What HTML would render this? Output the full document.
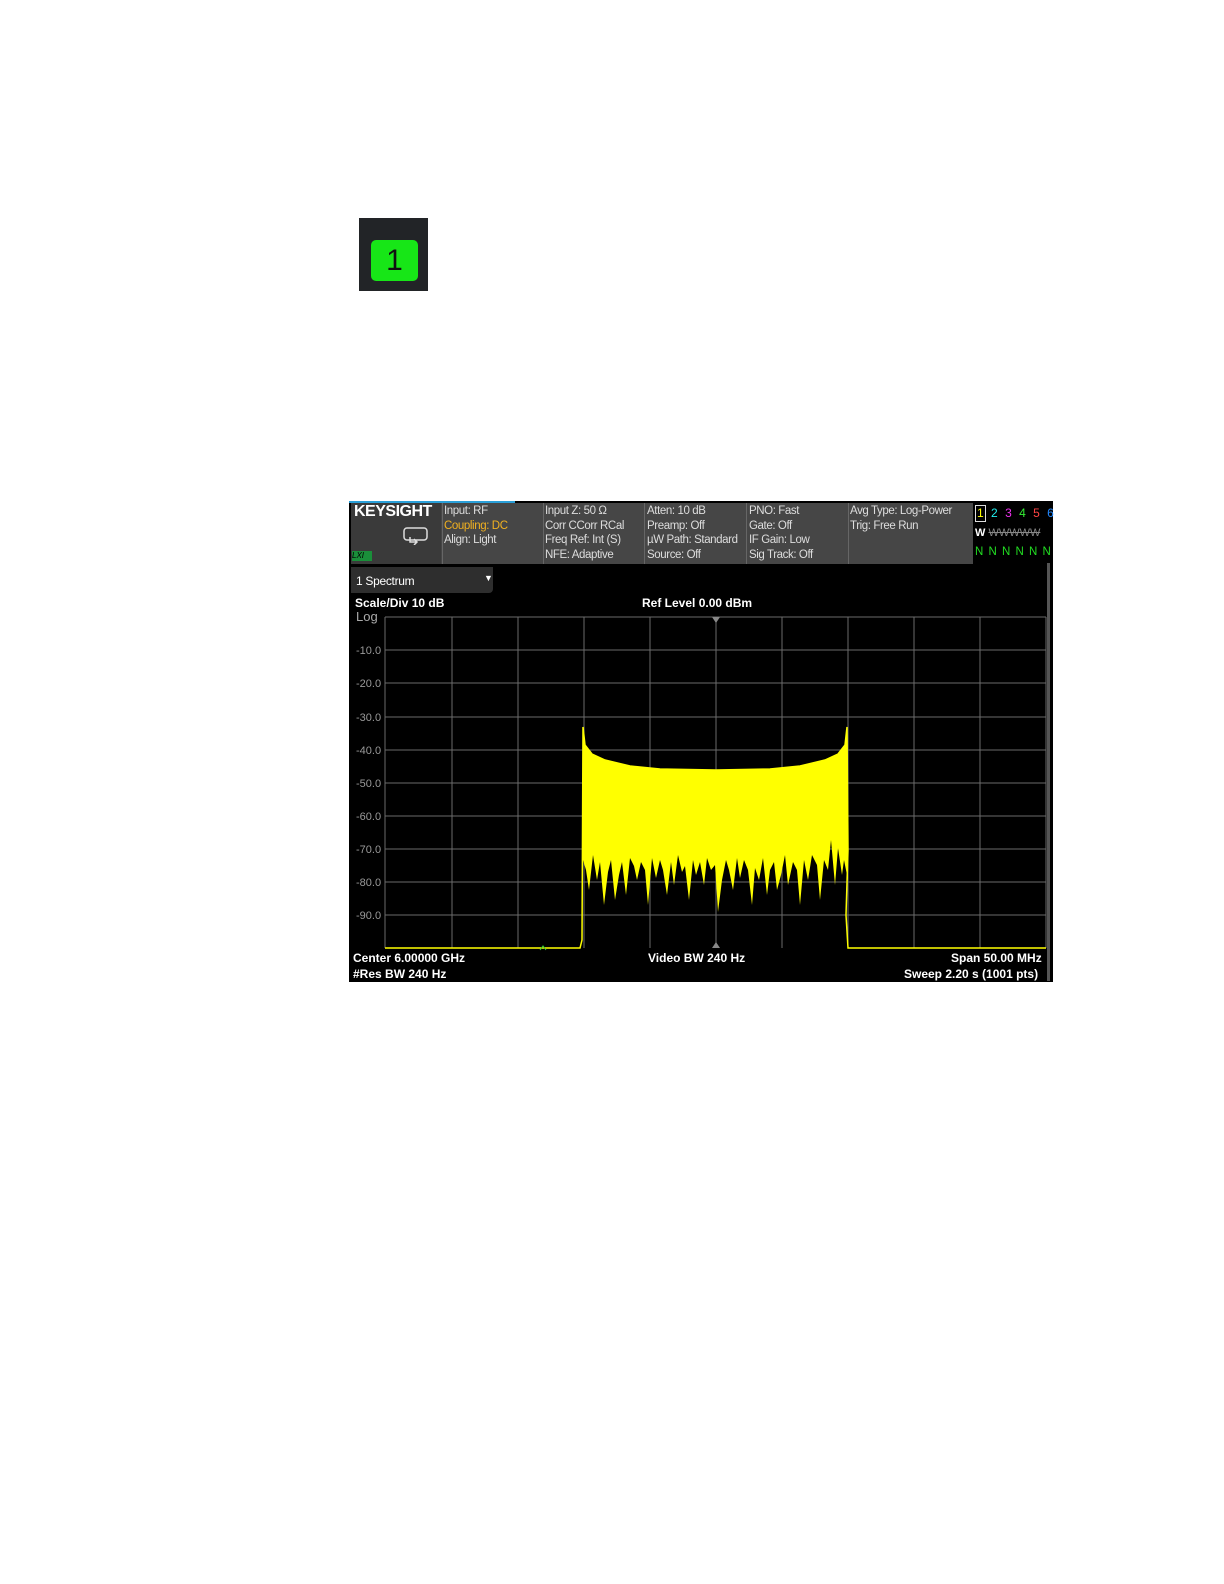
<!DOCTYPE html>
<html><head><meta charset="utf-8"><style>
body{margin:0;width:1224px;height:1584px;background:#fff;position:relative;font-family:"Liberation Sans",sans-serif;overflow:hidden}
.a{position:absolute}
.h{font-size:11.5px;color:#ddd;line-height:14.5px;letter-spacing:-0.4px}
</style></head><body>
<div class="a" style="left:359px;top:218px;width:69px;height:73px;background:#222427"></div>
<div class="a" style="left:371px;top:240px;width:47px;height:41px;background:#17e617;border-radius:5px;color:#111;font-size:30px;text-align:center;line-height:41px">1</div>

<div class="a" style="left:349px;top:501px;width:704px;height:481px;background:#000"></div>
<div class="a" style="left:349px;top:501px;width:166px;height:2px;background:#2a9fd8"></div>
<div class="a" style="left:351px;top:503px;width:698px;height:61px;background:#464646"></div>
<div class="a" style="left:351px;top:503px;width:90px;height:61px;background:#3a3a3a"></div>
<div class="a" style="left:354px;top:503px;font-size:16px;font-weight:bold;color:#fff;letter-spacing:-0.5px">KEYSIGHT</div>
<svg class="a" style="left:402px;top:527px" width="28" height="18"><rect x="2" y="1" width="23" height="12" rx="3" fill="none" stroke="#ddd" stroke-width="1.5"/><path d="M8 10v5h6M12 12l3 3-3 3" fill="none" stroke="#ddd" stroke-width="1.5"/></svg>
<div class="a" style="left:352px;top:551px;width:20px;height:10px;background:#1a8f3a;color:#000;font-size:8px;font-style:italic;line-height:10px">LXI</div>
<div class="a" style="left:442px;top:503px;width:1px;height:61px;background:#666"></div>
<div class="a" style="left:543px;top:503px;width:1px;height:61px;background:#666"></div>
<div class="a" style="left:644px;top:503px;width:1px;height:61px;background:#666"></div>
<div class="a" style="left:746px;top:503px;width:1px;height:61px;background:#666"></div>
<div class="a" style="left:848px;top:503px;width:1px;height:61px;background:#666"></div>
<div class="a h" style="left:444px;top:504px">Input: RF<br><span style="color:#f0b020">Coupling: DC</span><br>Align: Light</div>
<div class="a h" style="left:545px;top:504px">Input Z: 50 Ω<br>Corr CCorr RCal<br>Freq Ref: Int (S)<br>NFE: Adaptive</div>
<div class="a h" style="left:647px;top:504px">Atten: 10 dB<br>Preamp: Off<br>µW Path: Standard<br>Source: Off</div>
<div class="a h" style="left:749px;top:504px">PNO: Fast<br>Gate: Off<br>IF Gain: Low<br>Sig Track: Off</div>
<div class="a h" style="left:850px;top:504px">Avg Type: Log-Power<br>Trig: Free Run</div>
<div class="a" style="left:973px;top:503px;width:76px;height:61px;background:#000"></div>
<div class="a" style="left:975px;top:505px;width:9px;height:15px;border:1px solid #ddd"></div>
<div class="a" style="left:977px;top:506px;font-size:12px;letter-spacing:2px"><span style="color:#ff0">1</span> <span style="color:#2ee">2</span> <span style="color:#e3e">3</span> <span style="color:#3e3">4</span> <span style="color:#f44">5</span> <span style="color:#28f">6</span></div>
<div class="a" style="left:975px;top:527px;font-size:11px;color:#888"><b style="color:#fff">W</b> <s>WWWWW</s></div>
<div class="a" style="left:975px;top:546px;font-size:11.5px;color:#2d2;letter-spacing:1px">N N N N N N</div>
<div class="a" style="left:351px;top:567px;width:142px;height:26px;background:#2e2e2e;border-radius:0 0 4px 0"></div>
<div class="a" style="left:356px;top:574px;font-size:12px;color:#fff;letter-spacing:-0.3px">1 Spectrum</div>
<div class="a" style="left:484px;top:573px;font-size:9px;color:#fff">▼</div>
<div class="a" style="left:355px;top:596px;font-size:12px;font-weight:bold;color:#fff">Scale/Div 10 dB</div>
<div class="a" style="left:642px;top:596px;font-size:12px;font-weight:bold;color:#fff">Ref Level 0.00 dBm</div>
<div class="a" style="left:356px;top:609px;font-size:13px;color:#aaa">Log</div>
<svg class="a" style="left:349px;top:501px" width="704" height="481" viewBox="349 501 704 481">
<g stroke="#6a6a6a" stroke-width="1">
<path d="M452 617V948M518 617V948M584 617V948M650 617V948M716 617V948M782 617V948M848 617V948M914 617V948M980 617V948M1046 617V948"/>
<path d="M385 617H1046M385 650H1046M385 683H1046M385 717H1046M385 750H1046M385 783H1046M385 816H1046M385 849H1046M385 882H1046M385 915H1046"/>
<path d="M385 617V948"/>
</g>
<g font-size="11" fill="#999" font-family="Liberation Sans">
<text x="356" y="654">-10.0</text><text x="356" y="687">-20.0</text><text x="356" y="721">-30.0</text><text x="356" y="754">-40.0</text><text x="356" y="787">-50.0</text><text x="356" y="820">-60.0</text><text x="356" y="853">-70.0</text><text x="356" y="886">-80.0</text><text x="356" y="919">-90.0</text>
</g>
<path d="M385 948H580L582 940L583 727L585 745L592 754L605 760L630 766L660 769L716 770L770 769L800 766L825 760L838 754L845 745L847 727L848 850L846 915L848 948H1046" fill="none" stroke="#ff0" stroke-width="1.5"/>
<path d="M583 727L585 745L592 754L605 760L630 766L660 769L716 770L770 769L800 766L825 760L838 754L845 745L847 727L848 880L844 860L842 875L838 848L835 885L831 840L828 870L824 860L820 900L817 865L812 855L808 880L804 860L800 905L797 870L793 862L788 885L785 855L781 875L777 890L774 862L770 870L767 895L763 858L759 880L755 868L752 905L748 870L744 860L740 878L737 858L733 890L729 870L726 860L722 880L718 912L715 865L711 870L707 858L704 885L700 862L696 875L693 860L689 900L685 866L682 872L678 855L674 885L671 862L667 895L663 870L660 860L656 878L652 858L648 905L645 870L641 862L637 880L634 866L630 858L626 895L622 862L619 875L615 900L611 860L608 872L604 905L600 862L597 880L593 855L589 890L586 870L583 860L582 948Z" fill="#ff0"/>
<path d="M712 617l4 6 4-6zM712 948l4-6 4 6z" fill="#888"/>
<path d="M540 950l3-4 3 4" stroke="#3c3" fill="none"/>
</svg>
<div class="a" style="left:1047px;top:563px;width:3px;height:418px;background:#555"></div>
<div class="a" style="left:353px;top:951px;font-size:12px;font-weight:bold;color:#fff">Center 6.00000 GHz</div>
<div class="a" style="left:648px;top:951px;font-size:12px;font-weight:bold;color:#fff">Video BW 240 Hz</div>
<div class="a" style="left:951px;top:951px;font-size:12px;font-weight:bold;color:#fff">Span 50.00 MHz</div>
<div class="a" style="left:353px;top:967px;font-size:12px;font-weight:bold;color:#fff;height:14px;overflow:hidden">#Res BW 240 Hz</div>
<div class="a" style="left:904px;top:967px;font-size:12px;font-weight:bold;color:#fff;height:14px;overflow:hidden">Sweep 2.20 s (1001 pts)</div>
</body></html>
